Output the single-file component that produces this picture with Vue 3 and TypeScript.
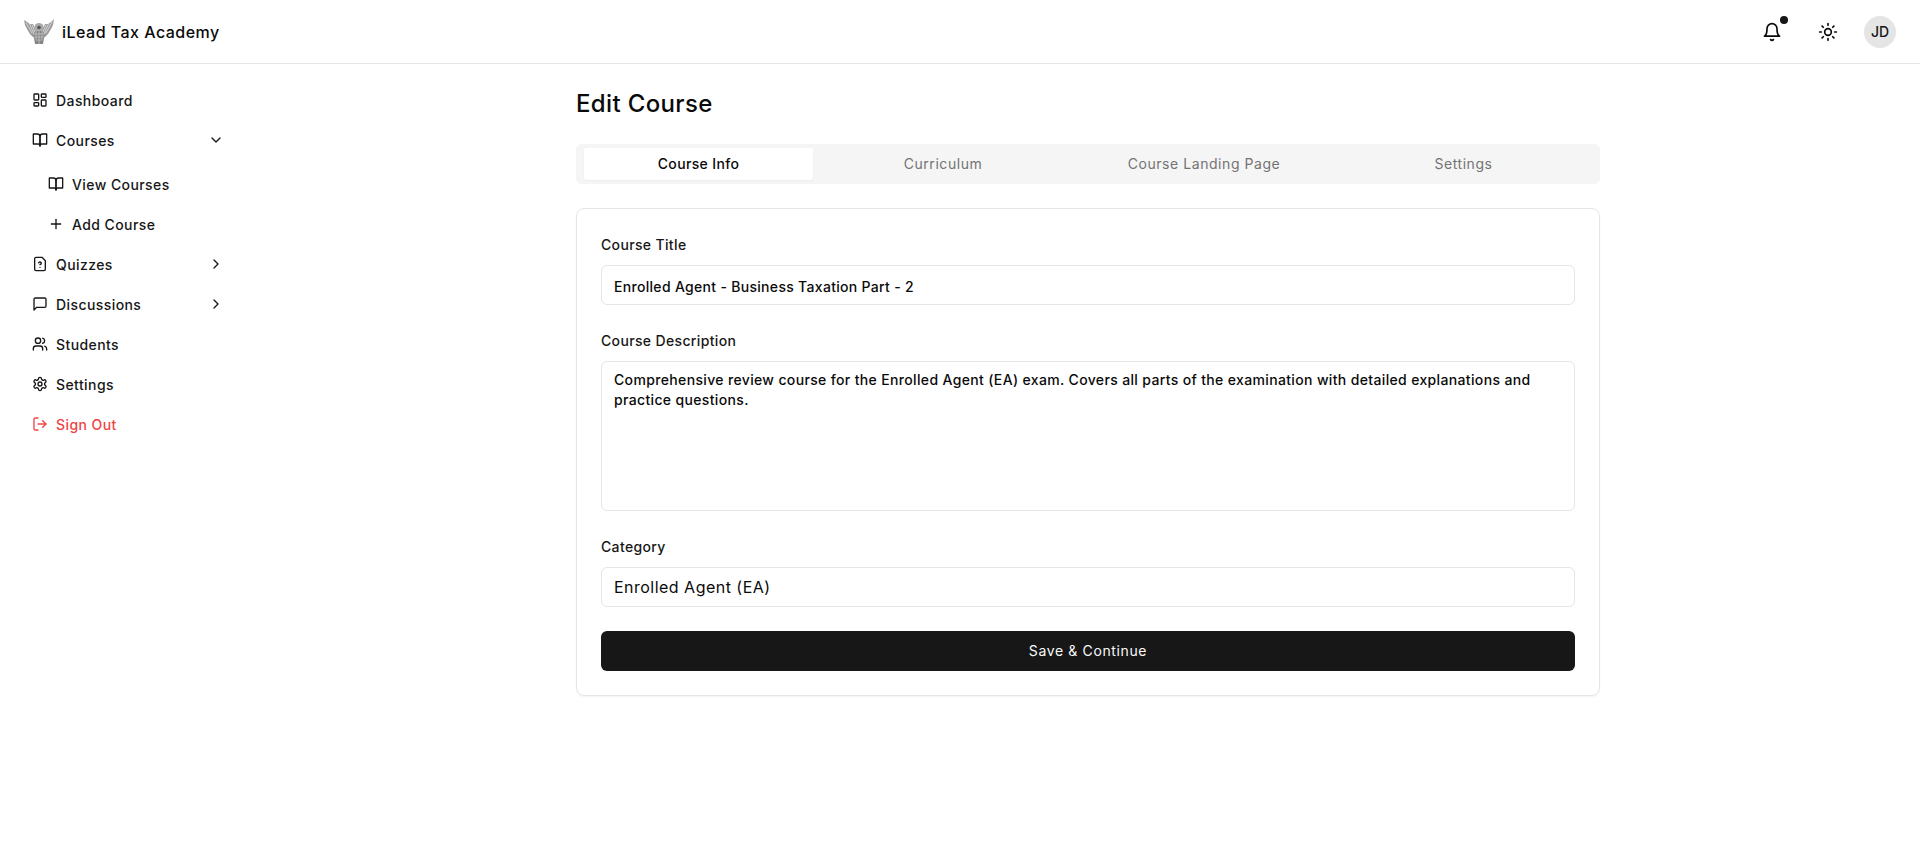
<script setup lang="ts">
import { ref } from 'vue';

type IconName =
  | 'dashboard' | 'book' | 'plus' | 'quiz' | 'message' | 'users' | 'settings' | 'logout'
  | 'down' | 'right' | 'bell' | 'sun';

const icons: Record<IconName, string[]> = {
  dashboard: [
    'M4 3h5a1 1 0 0 1 1 1v7a1 1 0 0 1-1 1H4a1 1 0 0 1-1-1V4a1 1 0 0 1 1-1z',
    'M15 3h5a1 1 0 0 1 1 1v3a1 1 0 0 1-1 1h-5a1 1 0 0 1-1-1V4a1 1 0 0 1 1-1z',
    'M15 12h5a1 1 0 0 1 1 1v7a1 1 0 0 1-1 1h-5a1 1 0 0 1-1-1v-7a1 1 0 0 1 1-1z',
    'M4 16h5a1 1 0 0 1 1 1v3a1 1 0 0 1-1 1H4a1 1 0 0 1-1-1v-3a1 1 0 0 1 1-1z',
  ],
  book: ['M2 3h6a4 4 0 0 1 4 4v14a3 3 0 0 0-3-3H2z', 'M22 3h-6a4 4 0 0 0-4 4v14a3 3 0 0 1 3-3h7z'],
  plus: ['M5 12h14', 'M12 5v14'],
  quiz: [
    'M15 2H6a2 2 0 0 0-2 2v16a2 2 0 0 0 2 2h12a2 2 0 0 0 2-2V7Z',
    'M10 10.3c.2-.4.5-.8.9-1a2.1 2.1 0 0 1 2.6.4c.3.4.5.8.5 1.3 0 1.3-2 2-2 2',
    'M12 17h.01',
  ],
  message: ['M21 15a2 2 0 0 1-2 2H7l-4 4V5a2 2 0 0 1 2-2h14a2 2 0 0 1 2 2z'],
  users: [
    'M16 21v-2a4 4 0 0 0-4-4H6a4 4 0 0 0-4 4v2',
    'M13 7a4 4 0 1 1-8 0 4 4 0 0 1 8 0z',
    'M22 21v-2a4 4 0 0 0-3-3.87',
    'M16 3.13a4 4 0 0 1 0 7.75',
  ],
  settings: [
    'M12.22 2h-.44a2 2 0 0 0-2 2v.18a2 2 0 0 1-1 1.73l-.43.25a2 2 0 0 1-2 0l-.15-.08a2 2 0 0 0-2.73.73l-.22.38a2 2 0 0 0 .73 2.73l.15.1a2 2 0 0 1 1 1.72v.51a2 2 0 0 1-1 1.74l-.15.09a2 2 0 0 0-.73 2.73l.22.38a2 2 0 0 0 2.73.73l.15-.08a2 2 0 0 1 2 0l.43.25a2 2 0 0 1 1 1.73V20a2 2 0 0 0 2 2h.44a2 2 0 0 0 2-2v-.18a2 2 0 0 1 1-1.73l.43-.25a2 2 0 0 1 2 0l.15.08a2 2 0 0 0 2.73-.73l.22-.39a2 2 0 0 0-.73-2.73l-.15-.08a2 2 0 0 1-1-1.74v-.5a2 2 0 0 1 1-1.74l.15-.09a2 2 0 0 0 .73-2.73l-.22-.38a2 2 0 0 0-2.73-.73l-.15.08a2 2 0 0 1-2 0l-.43-.25a2 2 0 0 1-1-1.73V4a2 2 0 0 0-2-2z',
    'M15 12a3 3 0 1 1-6 0 3 3 0 0 1 6 0z',
  ],
  logout: ['M9 21H5a2 2 0 0 1-2-2V5a2 2 0 0 1 2-2h4', 'm16 17 5-5-5-5', 'M21 12H9'],
  down: ['m6 9 6 6 6-6'],
  right: ['m9 18 6-6-6-6'],
  bell: ['M6 8a6 6 0 0 1 12 0c0 7 3 9 3 9H3s3-2 3-9', 'M10.3 21a1.94 1.94 0 0 0 3.4 0'],
  sun: [
    'M16 12a4 4 0 1 1-8 0 4 4 0 0 1 8 0z',
    'M12 2v2', 'M12 20v2', 'm4.93 4.93 1.41 1.41', 'm17.66 17.66 1.41 1.41',
    'M2 12h2', 'M20 12h2', 'm6.34 17.66-1.41 1.41', 'm19.07 4.93-1.41 1.41',
  ],
};

interface NavItem {
  label: string;
  icon: IconName;
  chevron?: IconName;
  nested?: boolean;
  danger?: boolean;
}

const nav: NavItem[] = [
  { label: 'Dashboard', icon: 'dashboard' },
  { label: 'Courses', icon: 'book', chevron: 'down' },
  { label: 'View Courses', icon: 'book', nested: true },
  { label: 'Add Course', icon: 'plus', nested: true },
  { label: 'Quizzes', icon: 'quiz', chevron: 'right' },
  { label: 'Discussions', icon: 'message', chevron: 'right' },
  { label: 'Students', icon: 'users' },
  { label: 'Settings', icon: 'settings' },
  { label: 'Sign Out', icon: 'logout', danger: true },
];

const tabs = ['Course Info', 'Curriculum', 'Course Landing Page', 'Settings'];
const activeTab = ref('Course Info');

const title = ref('Enrolled Agent - Business Taxation Part - 2');
const description = ref(
  'Comprehensive review course for the Enrolled Agent (EA) exam. Covers all parts of the examination with detailed explanations and practice questions.',
);
const category = ref('Enrolled Agent (EA)');
</script>

<template>
  <div class="page">
    <header class="topbar">
      <div class="brand">
        <svg class="logo" viewBox="0 0 30 26" width="30" height="26">
          <path d="M0 1 3 3 6 5 9 5 11 9 12 12 12 20 9 18 6 15 3 10 1 6z" fill="#9a9a9a" />
          <path d="M30 0 27 3 24 5 21 5 19 9 18 12 18 20 21 18 24 15 27 10 29 6z" fill="#9a9a9a" />
          <path d="M2 4 8 14M5 4 10 15M8 6 11 13M28 3 22 14M25 4 20 15M22 6 19 13" stroke="#ececec" stroke-width=".7" fill="none" />
          <circle cx="15" cy="8.5" r="4.6" fill="#a8a8a8" />
          <path d="M11 12h8l1 7-1 6h-8l-1-6z" fill="#858585" />
          <path d="M11 15h8M11 18h8M12 21h6M15 12v13M12 12v8M18 12v8" stroke="#d8d8d8" stroke-width=".6" fill="none" />
          <circle cx="15" cy="8.5" r="1.8" fill="#555" />
        </svg>
        <span class="brand-name">iLead Tax Academy</span>
      </div>
      <div class="actions">
        <button class="icon-btn" type="button" aria-label="Notifications">
          <svg class="icon-20" viewBox="0 0 24 24"><path v-for="d in icons.bell" :key="d" :d="d" /></svg>
          <span class="dot"></span>
        </button>
        <button class="icon-btn" type="button" aria-label="Theme">
          <svg class="icon-20" viewBox="0 0 24 24"><path v-for="d in icons.sun" :key="d" :d="d" /></svg>
        </button>
        <div class="avatar">JD</div>
      </div>
    </header>

    <div class="body">
      <aside class="sidebar">
        <a
          v-for="item in nav"
          :key="item.label"
          class="nav-item"
          :class="{ nested: item.nested, danger: item.danger, 'after-sub': item.label === 'View Courses' }"
        >
          <svg class="icon-16" viewBox="0 0 24 24"><path v-for="d in icons[item.icon]" :key="d" :d="d" /></svg>
          <span class="nav-label">{{ item.label }}</span>
          <svg v-if="item.chevron" class="icon-16 chevron" viewBox="0 0 24 24">
            <path v-for="d in icons[item.chevron]" :key="d" :d="d" />
          </svg>
        </a>
      </aside>

      <main class="main">
        <div class="content">
          <h1 class="heading">Edit Course</h1>

          <div class="tabs">
            <button
              v-for="tab in tabs"
              :key="tab"
              type="button"
              class="tab"
              :class="{ active: tab === activeTab }"
              @click="activeTab = tab"
            >
              {{ tab }}
            </button>
          </div>

          <form class="card" @submit.prevent>
            <div class="field">
              <label class="label" for="course-title">Course Title</label>
              <input id="course-title" v-model="title" class="control line" type="text" />
            </div>
            <div class="field">
              <label class="label" for="course-desc">Course Description</label>
              <textarea id="course-desc" v-model="description" class="control area"></textarea>
            </div>
            <div class="field">
              <label class="label" for="course-cat">Category</label>
              <select id="course-cat" v-model="category" class="control select">
                <option>Enrolled Agent (EA)</option>
              </select>
            </div>
            <button class="save" type="submit">Save &amp; Continue</button>
          </form>
        </div>
      </main>
    </div>
  </div>
</template>

<style>
html,
body {
  margin: 0;
  background: #fff;
}
</style>

<style scoped>
.page {
  height: 860px;
  overflow: hidden;
  font-family: Inter, "Noto Sans", sans-serif;
  color: #0a0a0a;
  background: #fff;
}

svg {
  fill: none;
  stroke: currentColor;
  stroke-width: 2;
  stroke-linecap: round;
  stroke-linejoin: round;
  flex-shrink: 0;
}

.icon-16 {
  width: 16px;
  height: 16px;
}

.icon-20 {
  width: 20px;
  height: 20px;
}

.topbar {
  height: 64px;
  box-sizing: border-box;
  display: flex;
  align-items: center;
  justify-content: space-between;
  padding: 0 24px;
  border-bottom: 1px solid #e5e5e5;
}

.brand {
  display: flex;
  align-items: center;
  gap: 8px;
}

.logo {
  stroke: none;
}

.brand-name {
  font-size: 16px;
  font-weight: 500;
  letter-spacing: 0.03em;
}

.actions {
  display: flex;
  align-items: center;
  gap: 16px;
}

.icon-btn {
  position: relative;
  width: 40px;
  height: 40px;
  padding: 0;
  border: 0;
  background: none;
  color: inherit;
  display: flex;
  align-items: center;
  justify-content: center;
}

.dot {
  position: absolute;
  top: 4px;
  right: 4px;
  width: 8px;
  height: 8px;
  border-radius: 50%;
  background: #171717;
}

.avatar {
  width: 32px;
  height: 32px;
  border-radius: 50%;
  background: #e5e5e5;
  display: flex;
  align-items: center;
  justify-content: center;
  font-size: 14px;
  font-weight: 500;
  color: #171717;
}

.body {
  display: flex;
}

.sidebar {
  width: 256px;
  flex-shrink: 0;
  box-sizing: border-box;
  padding: 16px;
  display: flex;
  flex-direction: column;
}

.nav-item {
  height: 40px;
  display: flex;
  align-items: center;
  gap: 8px;
  padding: 0 16px;
  font-size: 14px;
  font-weight: 500;
  letter-spacing: 0.03em;
  color: #171717;
}

.nav-item.nested {
  padding-left: 32px;
}

.nav-item.after-sub {
  margin-top: 4px;
}

.nav-item.danger {
  color: #ef4444;
}

.nav-label {
  flex: 1;
}

.main {
  flex: 1;
  min-width: 0;
  padding: 24px 0;
}

.content {
  width: 1024px;
  margin: 0 auto;
}

.heading {
  margin: 0 0 24px;
  font-size: 24px;
  line-height: 32px;
  font-weight: 500;
  letter-spacing: 0.015em;
}

.tabs {
  height: 40px;
  box-sizing: border-box;
  padding: 4px 8px;
  display: grid;
  grid-template-columns: 229px 260px 262px 257px;
  background: #f5f5f5;
  border-radius: 6px;
  margin-bottom: 24px;
}

.tab {
  border: 0;
  border-radius: 3px;
  background: none;
  padding: 0 0 1px;
  font: inherit;
  font-size: 14px;
  font-weight: 400;
  letter-spacing: 0.04em;
  color: #737373;
}

.tab.active {
  background: #fff;
  color: #0a0a0a;
  font-weight: 500;
  letter-spacing: 0.025em;
  box-shadow: 0 1px 2px rgba(0, 0, 0, 0.04);
}

.card {
  border: 1px solid #e5e5e5;
  border-radius: 8px;
  padding: 24px;
  display: flex;
  flex-direction: column;
  gap: 24px;
  box-shadow: 0 1px 2px rgba(0, 0, 0, 0.05);
}

.field {
  display: flex;
  flex-direction: column;
  gap: 8px;
}

.label {
  font-size: 14px;
  line-height: 24px;
  font-weight: 500;
  letter-spacing: 0.025em;
  color: #171717;
}

.control {
  box-sizing: border-box;
  width: 100%;
  height: 40px;
  padding: 8px 12px;
  border: 1px solid #e5e5e5;
  border-radius: 6px;
  background: #fff;
  font: inherit;
  font-size: 14px;
  line-height: 20px;
  font-weight: 500;
  letter-spacing: 0.025em;
  color: #0a0a0a;
  outline: none;
}

.line {
  padding: 9px 12px 7px;
  letter-spacing: 0.022em;
}

.area {
  height: 150px;
  resize: none;
  display: block;
}

.select {
  appearance: none;
  font-size: 16px;
  font-weight: 400;
  letter-spacing: 0.03em;
}

.save {
  height: 40px;
  border: 0;
  border-radius: 6px;
  padding: 0 0 2px;
  background: #171717;
  color: #fafafa;
  font: inherit;
  font-size: 14px;
  font-weight: 400;
  letter-spacing: 0.045em;
}
</style>
